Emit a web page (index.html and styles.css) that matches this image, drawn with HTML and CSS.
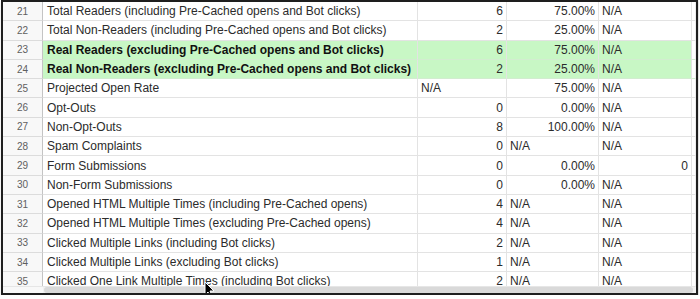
FILE: index.html
```html
<!DOCTYPE html>
<html>
<head>
<meta charset="utf-8">
<link rel="stylesheet" href="styles.css">
</head>
<body>
<div class="frame">
  <div class="sheet">
    <div class="row"><div class="rh">21</div><div class="c lab">Total Readers (including Pre-Cached opens and Bot clicks)</div><div class="c num">6</div><div class="c num">75.00%</div><div class="c txt">N/A</div><div class="c end"></div></div>
    <div class="row"><div class="rh">22</div><div class="c lab">Total Non-Readers (including Pre-Cached opens and Bot clicks)</div><div class="c num">2</div><div class="c num">25.00%</div><div class="c txt">N/A</div><div class="c end"></div></div>
    <div class="row hi"><div class="rh">23</div><div class="c lab">Real Readers (excluding Pre-Cached opens and Bot clicks)</div><div class="c num">6</div><div class="c num">75.00%</div><div class="c txt">N/A</div><div class="c end"></div></div>
    <div class="row hi"><div class="rh">24</div><div class="c lab">Real Non-Readers (excluding Pre-Cached opens and Bot clicks)</div><div class="c num">2</div><div class="c num">25.00%</div><div class="c txt">N/A</div><div class="c end"></div></div>
    <div class="row"><div class="rh">25</div><div class="c lab">Projected Open Rate</div><div class="c txt">N/A</div><div class="c num">75.00%</div><div class="c txt">N/A</div><div class="c end"></div></div>
    <div class="row"><div class="rh">26</div><div class="c lab">Opt-Outs</div><div class="c num">0</div><div class="c num">0.00%</div><div class="c txt">N/A</div><div class="c end"></div></div>
    <div class="row"><div class="rh">27</div><div class="c lab">Non-Opt-Outs</div><div class="c num">8</div><div class="c num">100.00%</div><div class="c txt">N/A</div><div class="c end"></div></div>
    <div class="row"><div class="rh">28</div><div class="c lab">Spam Complaints</div><div class="c num">0</div><div class="c txt">N/A</div><div class="c txt">N/A</div><div class="c end"></div></div>
    <div class="row"><div class="rh">29</div><div class="c lab">Form Submissions</div><div class="c num">0</div><div class="c num">0.00%</div><div class="c num">0</div><div class="c end"></div></div>
    <div class="row"><div class="rh">30</div><div class="c lab">Non-Form Submissions</div><div class="c num">0</div><div class="c num">0.00%</div><div class="c txt">N/A</div><div class="c end"></div></div>
    <div class="row"><div class="rh">31</div><div class="c lab">Opened HTML Multiple Times (including Pre-Cached opens)</div><div class="c num">4</div><div class="c txt">N/A</div><div class="c txt">N/A</div><div class="c end"></div></div>
    <div class="row"><div class="rh">32</div><div class="c lab">Opened HTML Multiple Times (excluding Pre-Cached opens)</div><div class="c num">4</div><div class="c txt">N/A</div><div class="c txt">N/A</div><div class="c end"></div></div>
    <div class="row"><div class="rh">33</div><div class="c lab">Clicked Multiple Links (including Bot clicks)</div><div class="c num">2</div><div class="c txt">N/A</div><div class="c txt">N/A</div><div class="c end"></div></div>
    <div class="row"><div class="rh">34</div><div class="c lab">Clicked Multiple Links (excluding Bot clicks)</div><div class="c num">1</div><div class="c txt">N/A</div><div class="c txt">N/A</div><div class="c end"></div></div>
    <div class="row"><div class="rh">35</div><div class="c lab">Clicked One Link Multiple Times (including Bot clicks)</div><div class="c num">2</div><div class="c txt">N/A</div><div class="c txt">N/A</div><div class="c end"></div></div>
  </div>
  <div class="hscroll"><div class="corner"></div><div class="track"><div class="thumb"></div></div></div>
  <svg class="cursor" width="12" height="18" viewBox="0 0 12 18"><path d="M1 1 L1 14 L4 11 L6.5 16.5 L8.5 15.5 L6 10 L10 10 Z" fill="#000" stroke="#fff" stroke-width="1"/></svg>
</div>
</body>
</html>
```
FILE: styles.css
```css
html, body {
  margin: 0;
  padding: 0;
  background: #fff;
}
.frame {
  position: relative;
  margin-left: 1px;
  width: 697px;
  height: 295px;
  box-sizing: border-box;
  border: 2px solid #1e1e1e;
  box-shadow: 0 2px 2px rgba(0, 0, 0, 0.12), 1px 0 1px rgba(0, 0, 0, 0.08);
  display: flex;
  flex-direction: column;
  overflow: hidden;
  font-family: "Liberation Sans", Arial, sans-serif;
}
.sheet {
  height: 285px;
  overflow: hidden;
  display: flex;
  flex-direction: column;
}
.row {
  display: grid;
  grid-template-columns: 40px 375px 89px 92px 93px 1fr;
  height: 19.3px;
  flex: none;
}
.row > div {
  box-sizing: border-box;
  border-right: 1px solid #e3e3e3;
  border-bottom: 1px solid #e3e3e3;
  display: flex;
  align-items: center;
  font-size: 12px;
  color: #2b2b2b;
  white-space: nowrap;
  overflow: hidden;
}
.row > .rh {
  justify-content: center;
  font-size: 10px;
  color: #5f5f5f;
  background: #f8f8f8;
  border-right: 1px solid #c4c4c4;
  border-bottom: 1px solid #dcdcdc;
}
.lab {
  padding-left: 4px;
}
.num {
  justify-content: flex-end;
  padding-right: 3px;
}
.txt {
  padding-left: 3px;
}
.row > .end {
  border-right: 1px solid #ececec;
}
.hi > .c {
  background: #c8f7c5;
  font-weight: bold;
  color: #111;
  border-bottom-color: #d2ecd0;
}
.hi > .end {
  background: #fff;
  font-weight: normal;
}
.hi > .num, .hi > .txt {
  font-weight: normal;
  color: #2b2b2b;
}
.hscroll {
  height: 6px;
  display: flex;
  background: #f1f1f1;
  border-top: 1px solid #e6e6e6;
}
.corner {
  width: 40px;
  background: #f8f8f8;
}
.track {
  flex: 1;
  padding: 0 3px 0 1px;
  display: flex;
}
.thumb {
  flex: 1;
  background: #d9d9d9;
  border-radius: 3px;
}
.cursor {
  position: absolute;
  left: 201px;
  top: 279px;
}
```
